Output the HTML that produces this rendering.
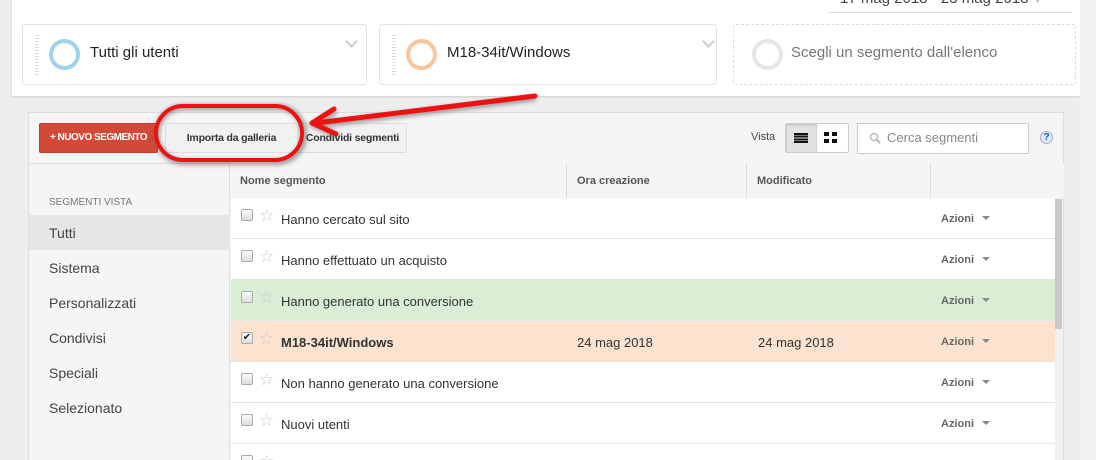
<!DOCTYPE html>
<html><head><meta charset="utf-8">
<style>
*{box-sizing:border-box;margin:0;padding:0}
html{width:1096px;height:460px;overflow:hidden}
body{width:1096px;height:460px;overflow:hidden;background:#eeeeee;font-family:"Liberation Sans",Arial,sans-serif;position:relative;color:#333}
.abs{position:absolute}
.top{left:12px;top:0;width:1068px;height:96px;background:#fff;box-shadow:0 1px 2px #ccc}
.card{top:24px;height:61px;background:#fff;border:1px solid #e2e2e2;border-radius:3px}
.grip{left:12px;top:10px;width:4px;height:42px;background:repeating-linear-gradient(#ddd 0 1px,transparent 1px 3px)}
.ring{left:26px;top:14px;width:31px;height:31px;border-radius:50%;border:4px solid}
.ctext{left:67px;top:19px;font-size:15px;color:#222}
.chev{top:12px;width:9px;height:9px;border-right:2px solid #ccc;border-bottom:2px solid #ccc;transform:rotate(45deg)}
.panel{left:28px;top:112px;width:1036px;height:348px;background:#f5f5f5;border:1px solid #ddd;border-bottom:none}
.btn{top:123px;height:30px;font-size:10.5px;letter-spacing:-0.2px;font-weight:bold;line-height:28px;text-align:center;border:1px solid #ddd;background:#f1f1f1;color:#333;border-radius:2px;white-space:nowrap;overflow:hidden}
.side{font-size:14px;color:#444;left:49px}
.row{left:231px;width:824px;height:41px;border-bottom:1px solid #e4e4e4;background:#fff}
.row .cb{position:absolute;left:10px;top:11px;width:12px;height:12px;border:1px solid #aaa;border-radius:2px;background:linear-gradient(#fafafa,#ddd)}
.row .st{position:absolute;left:28px;top:8px;font-size:17px;color:#ccc}
.row .nm{position:absolute;left:50px;top:14px;font-size:13px;color:#333}
.row .az{position:absolute;left:710px;top:15px;font-size:11px;font-weight:bold;color:#666}
.row .az:after{content:"";display:inline-block;margin-left:8px;border:4px solid transparent;border-top:4px solid #888;vertical-align:-2px}
.row .d{position:absolute;top:14px;font-size:13px}
.th{top:163px;height:36px;font-size:11px;font-weight:bold;color:#555;line-height:36px;padding-left:10px;border-right:1px solid #ddd;border-bottom:1px solid #ddd;background:#f5f5f5}
</style></head><body>
<div class="abs top"></div>
<div class="abs" style="left:840px;top:-10px;font-size:15px;color:#444">17 mag 2018 - 23 mag 2018 <span style="color:#bbb;font-size:10px">▼</span></div>
<div class="abs" style="left:828px;top:12px;width:244px;height:1px;background:#ddd"></div>
<div class="abs card" style="left:22px;width:345px"><div class="abs grip"></div><div class="abs ring" style="border-color:#9fd3ec"></div><div class="abs ctext">Tutti gli utenti</div><div class="abs chev" style="left:324px"></div></div>
<div class="abs card" style="left:379px;width:338px"><div class="abs grip"></div><div class="abs ring" style="border-color:#f7c69c"></div><div class="abs ctext">M18-34it/Windows</div><div class="abs chev" style="left:324px"></div></div>
<div class="abs card" style="left:733px;width:343px;border:1px dashed #ddd"><div class="abs ring" style="left:18px;border-color:#e6e6e6"></div><div class="abs ctext" style="left:57px;color:#777">Scegli un segmento dall'elenco</div></div>
<div class="abs" style="left:1080px;top:0;width:16px;height:460px;background:#f1f1f1"></div>

<div class="abs panel"></div>
<div class="abs btn" style="left:39px;width:119px;background:#d34836;color:#fff;border-color:#c03b2b;letter-spacing:-0.5px;font-size:10px">+ NUOVO SEGMENTO</div>
<div class="abs btn" style="left:165px;width:133px">Importa da galleria</div>
<div class="abs btn" style="left:298px;width:109px">Condividi segmenti</div>
<div class="abs" style="left:751px;top:131px;font-size:11px;color:#444">Vista</div>
<div class="abs" style="left:785px;top:123px;width:64px;height:30px;border:1px solid #ccc;border-radius:2px;background:#fff"></div>
<div class="abs" style="left:786px;top:124px;width:31px;height:28px;background:#e2e2e2;box-shadow:inset 0 1px 2px #bbb"></div>
<div class="abs" style="left:794px;top:133px;width:14px;height:10px;background:repeating-linear-gradient(#111 0 2px,transparent 2px 2.7px)"></div>
<div class="abs" style="left:824px;top:132px;width:5px;height:4px;background:#111;box-shadow:8px 0 #111,0 7px #111,8px 7px #111"></div>
<div class="abs" style="left:857px;top:123px;width:172px;height:31px;border:1px solid #ccc;background:#fff"></div>
<div class="abs" style="left:887px;top:130px;font-size:13px;color:#888">Cerca segmenti</div>
<svg class="abs" style="left:869px;top:132px" width="12" height="12"><circle cx="5" cy="5" r="3.5" fill="none" stroke="#bbb" stroke-width="1.5"/><line x1="7.5" y1="7.5" x2="11" y2="11" stroke="#bbb" stroke-width="2"/></svg>
<div class="abs" style="left:1040px;top:131px;width:13px;height:13px;border-radius:50%;background:#dbe8f5;border:1px solid #aac;font-size:10px;font-weight:bold;color:#2255aa;text-align:center;line-height:11px">?</div>

<div class="abs" style="left:29px;top:163px;width:201px;height:297px;background:#f5f5f5;border-right:1px solid #ddd;border-top:1px solid #ddd"></div>
<div class="abs" style="left:49px;top:197px;font-size:10px;color:#777">SEGMENTI VISTA</div>
<div class="abs" style="left:29px;top:215px;width:201px;height:35px;background:#e6e6e6"></div>
<div class="abs side" style="top:225px">Tutti</div>
<div class="abs side" style="top:260px">Sistema</div>
<div class="abs side" style="top:295px">Personalizzati</div>
<div class="abs side" style="top:330px">Condivisi</div>
<div class="abs side" style="top:365px">Speciali</div>
<div class="abs side" style="top:400px">Selezionato</div>

<div class="abs th" style="left:230px;width:337px">Nome segmento</div>
<div class="abs th" style="left:567px;width:180px">Ora creazione</div>
<div class="abs th" style="left:747px;width:184px">Modificato</div>
<div class="abs th" style="left:931px;width:133px;border-right:none"></div>

<div class="abs row" style="top:198px"><div class="cb"></div><div class="st">☆</div><div class="nm">Hanno cercato sul sito</div><div class="az">Azioni</div></div>
<div class="abs row" style="top:239px"><div class="cb"></div><div class="st">☆</div><div class="nm">Hanno effettuato un acquisto</div><div class="az">Azioni</div></div>
<div class="abs row" style="top:280px;background:#d9eed5"><div class="cb"></div><div class="st">☆</div><div class="nm">Hanno generato una conversione</div><div class="az">Azioni</div></div>
<div class="abs row" style="top:321px;background:#fbe3d0"><div class="cb" style="font-size:10px;line-height:10px;text-align:center;color:#222">✔</div><div class="st">☆</div><div class="nm" style="font-weight:bold">M18-34it/Windows</div><div class="d" style="left:346px">24 mag 2018</div><div class="d" style="left:527px">24 mag 2018</div><div class="az">Azioni</div></div>
<div class="abs row" style="top:362px"><div class="cb"></div><div class="st">☆</div><div class="nm">Non hanno generato una conversione</div><div class="az">Azioni</div></div>
<div class="abs row" style="top:403px"><div class="cb"></div><div class="st">☆</div><div class="nm">Nuovi utenti</div><div class="az">Azioni</div></div>
<div class="abs row" style="top:444px;height:16px;border-bottom:none;overflow:hidden"><div class="cb"></div><div class="st">☆</div></div>
<div class="abs" style="left:1055px;top:198px;width:8px;height:262px;background:#f0f0f0"></div>
<div class="abs" style="left:1055px;top:199px;width:7px;height:130px;background:#c8c8c8"></div>

<svg class="abs" style="left:0;top:0" width="1096" height="460">
<defs><filter id="sh" x="-20%" y="-20%" width="140%" height="140%"><feGaussianBlur stdDeviation="2"/></filter></defs>
<g stroke="#666" stroke-width="6" fill="none" filter="url(#sh)" opacity="0.6">
<rect x="157" y="107" width="147" height="55" rx="27"/>
<path d="M536 98 L318 125 M336 111 L314 125 L338 136"/>
</g>
<g stroke="#ee1111" stroke-width="5" fill="none" stroke-linecap="round" stroke-linejoin="round">
<rect x="156" y="106" width="146" height="54" rx="27" stroke-width="4"/>
<path d="M535 96 L316 123 M334 109 L312 123 L336 134"/>
</g>
</svg>
</body></html>
